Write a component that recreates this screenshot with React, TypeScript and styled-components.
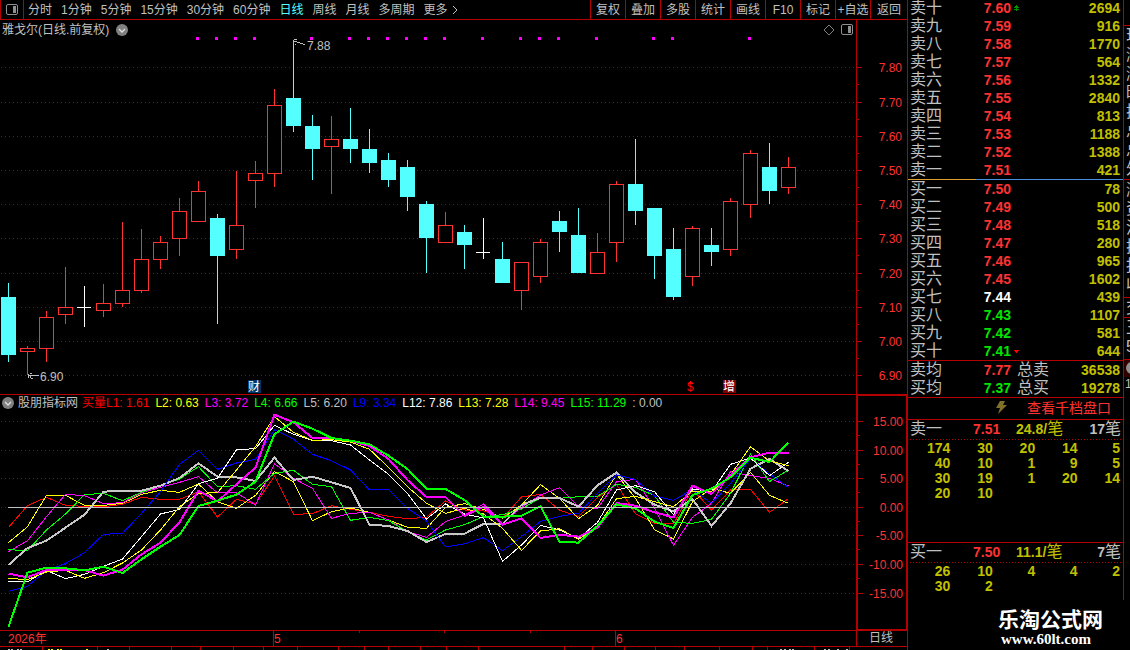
import React from 'react';
import styled, { createGlobalStyle, css } from 'styled-components';

const C = {
  line: '#b40000',
  dot: '#a00000',
  up: '#ff3232',
  down: '#54ffff',
  gray: '#c0c0c0',
  yellow: '#c0c000',
  green: '#00e600',
};

const Global = createGlobalStyle`
  *, *::before, *::after { box-sizing: border-box; }
  body {
    margin: 0;
    background: #000;
    color: ${C.gray};
    font: 12px/14px "Liberation Sans", "Noto Sans CJK SC", sans-serif;
    overflow: hidden;
  }
  button { font: inherit; color: inherit; background: none; border: 0; padding: 0; cursor: pointer; white-space: nowrap; }
  svg { display: block; }
  svg text { font: 12px "Liberation Sans", "Noto Sans CJK SC", sans-serif; }
`;

const Page = styled.div`
  display: flex;
  align-items: stretch;
  height: 100vh;
  overflow: hidden;
`;

const Main = styled.main`
  flex: 1;
  min-width: 0;
  display: flex;
  flex-direction: column;
`;

/* toolbar */
const Toolbar = styled.nav`
  display: flex;
  height: 20px;
  flex: none;
  border-bottom: 1px solid ${C.line};
`;
const LayoutButton = styled.button`
  display: flex;
  align-items: center;
  justify-content: center;
  width: 24px;
  border: solid ${C.line};
  border-width: 0 1px;
`;
const Periods = styled.div`
  display: flex;
  align-items: center;
  gap: 9px;
  padding-left: 4px;
`;
const Period = styled.button<{ $active?: boolean }>`
  display: flex;
  align-items: center;
  gap: 4px;
  color: ${p => (p.$active ? C.down : C.gray)};
`;
const Tools = styled.div`
  display: flex;
  margin-left: auto;
`;
const Tool = styled.button`
  width: 35px;
  border-left: 1px solid ${C.line};
  &:last-child { width: 37px; }
`;

/* chart panels */
const ChartRow = styled.section`
  display: grid;
  grid-template-columns: minmax(0, 1fr) 51px;
  flex: none;
`;
const Plot = styled.div<{ $framed?: boolean }>`
  min-width: 0;
  overflow: hidden;
  ${p => p.$framed && css`
    border: solid ${C.line};
    border-width: 1px 0;
  `}
`;
const Axis = styled.div<{ $framed?: boolean }>`
  border-left: 1px solid ${C.line};
  ${p => p.$framed && css`
    border: 2px solid ${C.line};
    border-right-width: 1px;
  `}
`;
const PlotHeader = styled.header`
  display: flex;
  align-items: center;
  height: 17px;
  padding: 2px 3px 0 2px;
  white-space: nowrap;
`;
const Title = styled.h1`
  margin: 0 7px 0 0;
  font-size: 12px;
  font-weight: 400;
`;
const HeaderIcons = styled.div`
  display: flex;
  align-items: center;
  gap: 6px;
  margin-left: auto;
`;
const Legend = styled.div`
  display: flex;
  align-items: center;
  height: 16px;
  padding-left: 2px;
  gap: 6px;
  white-space: nowrap;
`;
const LegendName = styled.span`
  margin: 0 -2px;
`;
const LegendItem = styled.span<{ $color: string }>`
  color: ${p => p.$color};
`;
const DateRow = styled(ChartRow)`
  height: 15px;
`;
const AxisFooter = styled.div`
  border-left: 1px solid ${C.line};
  text-align: center;
  padding-right: 2px;
`;
const BottomStrip = styled.div`
  border-top: 1px solid ${C.line};
  height: 4px;
`;

/* order book */
const Book = styled.aside`
  flex: 0 0 217px;
  display: flex;
  flex-direction: column;
  border-left: 1px solid ${C.line};
  font-size: 16px;
  line-height: 18px;
`;
const BookBody = styled.div`
  height: 600px;
  flex: none;
  border-right: 1px solid ${C.line};
  overflow: hidden;
`;
const Ladder = styled.table<{ $first?: boolean }>`
  width: 100%;
  table-layout: fixed;
  border-collapse: collapse;
  margin-top: ${p => (p.$first ? '-1px' : '0')};
  tr { height: 18px; }
  th, td { padding: 0; font-weight: 400; text-align: left; white-space: nowrap; height: 18px; line-height: 18px; }
  th { padding-left: 2px; }
`;
const Num = styled.span<{ $color?: string }>`
  font: bold 14px/18px "Liberation Sans", sans-serif;
  color: ${p => p.$color || C.yellow};
`;
const Right = styled.td`
  && { text-align: right; }
`;
const Volume = styled(Right)`
  && { padding-right: 3px; }
`;
const Mark = styled.td<{ $text?: boolean }>`
  && { padding-left: ${p => (p.$text ? 6 : 3)}px; }
`;
const Split = styled.div`
  height: 1px;
  background: linear-gradient(90deg, #e0a030 68px, #4a90e0 68px);
`;
const Rule = styled.div`
  height: 1px;
  background: ${C.line};
`;
const DottedRule = styled.div`
  height: 1px;
  margin: 0 1px 0 2px;
  background: repeating-linear-gradient(90deg, ${C.line} 0 1px, transparent 1px 3px);
`;
const DepthLink = styled.a`
  display: flex;
  align-items: center;
  justify-content: flex-end;
  gap: 20px;
  height: 21px;
  padding: 0 12px 2px 0;
  font-size: 14px;
  color: ${C.up};
  text-decoration: none;
`;
const QueueHead = styled.div`
  display: grid;
  grid-template-columns: 63px 43px 1fr auto;
  height: 19px;
  padding: 0 2px;
  white-space: nowrap;
`;
const PerOrder = styled.span`
  color: ${C.yellow};
`;
const QueueGrid = styled.div<{ $rows: number }>`
  display: grid;
  grid-template-columns: repeat(5, 1fr);
  grid-auto-rows: 15px;
  height: ${p => p.$rows}px;
  padding-right: 3px;
  text-align: right;
  ${Num} { line-height: 16px; }
`;
const Brand = styled.footer`
  flex: 1;
  display: flex;
  flex-direction: column;
  padding: 5px 0 0 90px;
  color: #fff;
  white-space: nowrap;
`;
const BrandName = styled.strong`
  font: bold 21px/26px "Noto Sans CJK SC", sans-serif;
`;
const BrandSite = styled.strong`
  padding-left: 3px;
  font: bold 15px/16px "Liberation Serif", serif;
`;

/* the next panel, cut by the window edge */
const Strip = styled.aside`
  flex: 0 0 6px;
  padding-top: 25px;
  overflow: hidden;
  font-size: 16px;
  white-space: nowrap;
`;
const StripGroup = styled.div<{ $height: number }>`
  height: ${p => p.$height}px;
  border-top: 1px solid ${C.line};
  padding-left: 2px;
  line-height: 19px;
`;
const StripBadge = styled.div`
  height: 18px;
  padding: 2px 0 0 2px;
  border-top: 1px solid ${C.line};
  background: #300000;
`;
const StripCount = styled.div`
  padding-left: 1px;
  font-size: 12px;
`;

const xAt = (k: number) => Math.round(8 + 19.013 * k);

type Kind = 'u' | 'd' | 'x';
/* kind, high, body top, body bottom, low */
const candles: [Kind, number, number, number, number][] = [
  ['d', 283, 297, 355, 362], ['u', 346, 348, 352, 375], ['u', 311, 317, 349, 362],
  ['u', 267, 307, 315, 324], ['x', 286, 307, 308, 327], ['u', 284, 303, 311, 317],
  ['u', 222, 290, 304, 307], ['u', 229, 259, 291, 293], ['u', 236, 242, 260, 269],
  ['u', 198, 211, 239, 256], ['u', 181, 191, 222, 222], ['d', 214, 218, 256, 324],
  ['u', 171, 225, 250, 259], ['u', 161, 173, 181, 208], ['u', 89, 105, 174, 187],
  ['d', 40, 98, 126, 132], ['d', 115, 126, 149, 180], ['u', 116, 139, 147, 194],
  ['d', 108, 139, 149, 163], ['d', 129, 149, 163, 173], ['d', 153, 160, 180, 187],
  ['d', 160, 167, 197, 211], ['d', 201, 204, 238, 273], ['u', 212, 225, 243, 243],
  ['d', 225, 232, 245, 269], ['x', 218, 252, 253, 259], ['d', 242, 259, 283, 283],
  ['u', 262, 262, 291, 310], ['u', 239, 242, 277, 283], ['d', 211, 221, 232, 252],
  ['d', 208, 235, 273, 273], ['u', 233, 252, 274, 274], ['u', 181, 184, 243, 262],
  ['d', 139, 184, 211, 225], ['d', 208, 208, 256, 279], ['d', 228, 249, 297, 300],
  ['u', 226, 228, 277, 286], ['d', 228, 245, 252, 266], ['u', 198, 201, 250, 256],
  ['u', 150, 153, 205, 218], ['d', 143, 167, 191, 204], ['u', 157, 167, 188, 194],
];

const signalBars = [10, 11, 12, 13, 16, 18, 19, 20, 21, 22, 23, 25, 27, 28, 29, 31, 34, 35, 39];

const priceTicks: [number, string][] = [
  [67, '7.80'], [102, '7.70'], [136, '7.60'], [170, '7.50'], [204, '7.40'],
  [238, '7.30'], [273, '7.20'], [307, '7.10'], [341, '7.00'], [375, '6.90'],
];
const valueTicks: [number, string][] = [
  [421, '15.00'], [450, '10.00'], [478, '5.00'], [507, '0.00'],
  [535, '-5.00'], [564, '-10.00'], [593, '-15.00'],
];

/* depth below the top of the indicator panel, in thirds of a pixel */
const series: { color: string; width: number; pts: number[] }[] = [
  { color: '#ff0000', width: 1, pts: [412,347,322,346,349,350,343,322,328,328,305,381,328,342,258,373,371,347,358,367,379,386,382,333,360,362,385,321,313,360,380,322,283,371,400,402,298,360,300,298,367,326] },
  { color: '#ffff00', width: 1, pts: [458,410,316,316,346,346,340,313,301,307,282,335,355,316,245,275,392,365,354,367,390,412,415,352,341,358,385,345,284,325,386,346,253,325,419,447,335,295,310,247,316,340] },
  { color: '#ff00ff', width: 1, pts: [485,452,380,313,317,341,338,308,292,277,260,309,308,345,221,265,295,385,370,367,390,425,442,395,375,342,400,352,315,293,350,355,275,268,355,466,382,340,245,257,265,288] },
  { color: '#00ff00', width: 1, pts: [479,482,420,372,314,310,332,307,287,267,230,290,287,298,250,241,283,290,391,382,392,425,450,420,404,380,374,357,323,325,320,319,283,292,317,397,400,388,310,192,275,240] },
  { color: '#c8c8c8', width: 2, pts: [525,474,452,413,374,305,302,302,287,264,220,260,262,273,203,270,260,277,294,404,408,423,456,432,431,402,402,345,323,324,350,286,248,307,344,364,327,408,340,236,207,243] },
  { color: '#0000ff', width: 1, pts: [604,589,541,521,488,433,430,370,305,223,181,238,219,208,119,148,193,212,240,300,298,355,393,471,461,443,482,440,394,379,370,310,255,269,318,331,298,340,280,205,252,292] },
  { color: '#ffffff', width: 1, pts: [574,576,541,566,553,529,507,440,372,358,281,265,179,176,106,133,151,152,165,210,253,310,387,342,372,384,514,465,406,420,445,397,300,287,305,374,297,305,223,204,257,217] },
  { color: '#ffff00', width: 1, pts: [565,569,546,541,565,548,519,480,420,350,310,308,240,170,80,127,151,149,156,178,232,290,340,370,355,372,415,481,423,416,448,410,326,319,335,350,303,305,255,170,213,227] },
  { color: '#ff00ff', width: 2, pts: [551,562,540,540,540,557,539,493,458,397,302,334,283,233,74,97,144,144,152,168,207,270,321,321,378,350,404,385,444,434,440,413,339,347,367,382,287,312,255,202,188,188] },
  { color: '#00ff00', width: 2, pts: [710,548,533,535,541,530,549,508,470,435,348,332,314,275,132,95,116,144,152,163,197,237,296,297,330,380,380,377,349,455,458,408,343,355,395,414,315,296,262,203,216,158] },
];

const legend: [string, string][] = [
  ['买量L1: 1.61', '#ff0000'], ['L2: 0.63', '#ffff00'], ['L3: 3.72', '#ff00ff'], ['L4: 6.66', '#00ff00'],
  ['L5: 6.20', C.gray], ['L9: 3.34', '#0000ff'], ['L12: 7.86', '#ffffff'], ['L13: 7.28', '#ffff00'],
  ['L14: 9.45', '#ff00ff'], ['L15: 11.29', '#00ff00'], [': 0.00', C.gray],
];

const periods = ['分时', '1分钟', '5分钟', '15分钟', '30分钟', '60分钟', '日线', '周线', '月线', '多周期'];
const tools = ['复权', '叠加', '多股', '统计', '画线', 'F10', '标记', '+自选', '返回'];

const asks = [
  ['卖十', '7.60', '2694'], ['卖九', '7.59', '916'], ['卖八', '7.58', '1770'], ['卖七', '7.57', '564'],
  ['卖六', '7.56', '1332'], ['卖五', '7.55', '2840'], ['卖四', '7.54', '813'], ['卖三', '7.53', '1188'],
  ['卖二', '7.52', '1388'], ['卖一', '7.51', '421'],
];
const bids = [
  ['买一', '7.50', '78'], ['买二', '7.49', '500'], ['买三', '7.48', '518'], ['买四', '7.47', '280'],
  ['买五', '7.46', '965'], ['买六', '7.45', '1602'], ['买七', '7.44', '439'], ['买八', '7.43', '1107'],
  ['买九', '7.42', '581'], ['买十', '7.41', '644'],
];
const previousClose = 7.44;
const priceColor = (p: string) =>
  +p > previousClose ? C.up : +p < previousClose ? C.green : '#fff';

const askQueue = ['174', '30', '20', '14', '5', '40', '10', '1', '9', '5', '30', '19', '1', '20', '14', '20', '10'];
const bidQueue = ['26', '10', '4', '4', '2', '30', '2'];

const GridLines = ({ ticks }: { ticks: [number, string][] }) => (
  <>
    {ticks.map(([y]) => (
      <line key={y} x1="1" x2="100%" y1={y + 0.5} y2={y + 0.5} stroke={C.dot} strokeDasharray="1 3" />
    ))}
  </>
);

const DropIcon = () => (
  <svg width="12" height="12" viewBox="0 0 12 12">
    <circle cx="6" cy="6" r="6" fill="#808080" />
    <path d="M3 5l3 3 3-3" fill="none" stroke="#e0e0e0" strokeWidth="1.3" />
  </svg>
);

const PanelIcon = () => (
  <svg width="12" height="11" viewBox="0 0 12 11">
    <rect x="0.5" y="0.5" width="11" height="10" rx="1.5" fill="none" stroke="#909090" />
    <rect x="7" y="2" width="3" height="7" fill="#909090" />
  </svg>
);

const PriceChart = () => (
  <svg width="100%" height="357" shapeRendering="crispEdges">
    <g transform="translate(0,-37)">
      <GridLines ticks={priceTicks} />
      {signalBars.map(k => <rect key={k} x={xAt(k) - 2} y="37" width="3" height="3" fill="#ff00ff" />)}
      {candles.map(([kind, high, top, bottom, low], k) => {
        const x = xAt(k);
        if (kind === 'd')
          return (
            <g key={k} fill={C.down}>
              <rect x={x} y={high} width="1" height={low - high} />
              <rect x={x - 7} y={top} width="15" height={bottom - top} />
            </g>
          );
        if (kind === 'x')
          return (
            <g key={k} fill="#fff">
              <rect x={x} y={high} width="1" height={low - high} />
              <rect x={x - 7} y={top} width="14" height="1" />
            </g>
          );
        return (
          <g key={k}>
            <rect x={x} y={high} width="1" height={low - high} fill={C.up} />
            <rect x={x - 6.5} y={top + 0.5} width="14" height={bottom - top - 1} fill="#000" stroke={C.up} />
          </g>
        );
      })}
      <g fill="none" stroke={C.gray}>
        <path d="M293.5 46v-6M293 41.5h4M294 39.5h3M295 44.5h1M297 42.5h3M300 43.5h3M303 44.5h2" />
        <path d="M28 375.5h11M28.5 374v4M30.5 376v2M30 373.5h2M31 378.5h2" />
      </g>
      <text x="307" y="50" fill={C.gray}>7.88</text>
      <text x="40" y="381" fill={C.gray}>6.90</text>
      <rect x="248" y="380" width="13" height="13" fill="#003366" />
      <text x="248" y="391" fill="#fff">财</text>
      <path d="M690.5 381l3 3h-6z" fill="#ff0000" />
      <text x="687" y="391" fill="#ff0000">$</text>
      <rect x="723" y="380" width="13" height="13" fill="#800000" />
      <text x="723" y="391" fill="#fff">增</text>
    </g>
  </svg>
);

const AxisScale = ({ ticks, top, height, left, half }: {
  ticks: [number, string][]; top: number; height: number; left: number; half: number;
}) => (
  <svg width="100%" height={height} shapeRendering="crispEdges">
    <g transform={`translate(${-left},${-top})`}>
      {ticks.map(([y, label], i) => (
        <g key={label}>
          <rect x="857" y={y} width="5" height="1" fill={C.line} />
          {i < ticks.length - 1 && <rect x="857" y={y + half} width="2" height="1" fill={C.line} />}
          <text x="902" y={y + 5} textAnchor="end" fill={C.up}>{label}</text>
        </g>
      ))}
    </g>
  </svg>
);

const IndicatorChart = () => (
  <svg width="100%" height="219" shapeRendering="crispEdges">
    <g transform="translate(0,-411)">
      <GridLines ticks={valueTicks} />
      {series.map((s, i) => (
        <polyline
          key={i}
          fill="none"
          stroke={s.color}
          strokeWidth={s.width}
          points={s.pts.map((v, k) => `${xAt(k) + 0.5},${390 + v / 3}`).join(' ')}
        />
      ))}
      <rect x="8" y="507" width="780" height="1" fill={C.gray} />
    </g>
  </svg>
);

const DateScale = () => (
  <svg width="100%" height="15" shapeRendering="crispEdges">
    {[359, 444, 530].map(x => <rect key={x} x={x} y="0" width="1" height="2" fill={C.line} />)}
    <text x="8" y="12" fill={C.up}>2026年</text>
    <rect x="273" width="1" height="15" fill={C.line} />
    <text x="274" y="12" fill={C.up}>5</text>
    <rect x="615" width="1" height="15" fill={C.line} />
    <text x="616" y="12" fill={C.up}>6</text>
  </svg>
);

const tabEdges = [42, 97, 129, 171, 200, 233, 263, 297, 338, 364, 388, 420, 446, 478, 564, 592, 624, 655, 684, 719, 752, 767, 814, 849];
const tabMarks: [number, string][] = [
  [8, C.gray], [11, C.gray], [17, C.gray], [20, C.gray], [48, '#ffff00'], [51, '#ffff00'], [57, '#ffff00'], [60, '#ffff00'],
  [86, '#ffff00'], [107, C.gray], [780, C.gray], [784, C.gray], [789, C.gray], [792, C.gray], [824, C.gray], [828, C.gray], [837, C.gray], [846, C.gray],
];

const LadderCols = () => (
  <colgroup>
    <col width="42" />
    <col width="61" />
    <col width="42" />
    <col />
  </colgroup>
);

const LadderRows = ({ rows, marks }: { rows: string[][]; marks: Record<string, React.ReactNode> }) => (
  <tbody>
    {rows.map(([name, price, volume]) => (
      <tr key={name}>
        <th scope="row">{name}</th>
        <Right><Num $color={priceColor(price)}>{price}</Num></Right>
        <Mark>{marks[name]}</Mark>
        <Volume><Num>{volume}</Num></Volume>
      </tr>
    ))}
  </tbody>
);

const UpMark = () => (
  <svg width="5" height="6" viewBox="0 0 5 6" shapeRendering="crispEdges">
    <path d="M2 0h1v1h1v1h1v1H0V2h1V1h1zM2 3h1v1h2v1H3v1H2V5H0V4h2z" fill="#009000" />
  </svg>
);
const DownMark = () => (
  <svg width="5" height="3" viewBox="0 0 5 3" shapeRendering="crispEdges">
    <path d="M0 0h5v1H4v1H3v1H2V2H1V1H0z" fill="#ff0000" />
  </svg>
);

export default function App() {
  return (
    <>
      <Global />
      <Page>
        <Main>
          <Toolbar>
            <LayoutButton aria-label="布局"><PanelIcon /></LayoutButton>
            <Periods>
              {periods.map(p => <Period key={p} $active={p === '日线'}>{p}</Period>)}
              <Period>
                更多
                <svg width="6" height="10" viewBox="0 0 6 10"><path d="M1 1l4 4-4 4" fill="none" stroke={C.gray} /></svg>
              </Period>
            </Periods>
            <Tools>{tools.map(t => <Tool key={t}>{t}</Tool>)}</Tools>
          </Toolbar>

          <ChartRow>
            <Plot>
              <PlotHeader>
                <Title>雅戈尔(日线.前复权)</Title>
                <DropIcon />
                <HeaderIcons>
                  <svg width="12" height="12" viewBox="0 0 12 12"><path d="M6 1l5 5-5 5-5-5z" fill="none" stroke="#808080" /></svg>
                  <PanelIcon />
                </HeaderIcons>
              </PlotHeader>
              <PriceChart />
            </Plot>
            <Axis><AxisScale ticks={priceTicks} top={20} height={374} left={857} half={17} /></Axis>
          </ChartRow>

          <ChartRow>
            <Plot $framed>
              <Legend>
                <DropIcon />
                <LegendName>股朋指标网</LegendName>
                {legend.map(([label, color]) => <LegendItem key={label} $color={color}>{label}</LegendItem>)}
              </Legend>
              <IndicatorChart />
            </Plot>
            <Axis $framed><AxisScale ticks={valueTicks} top={396} height={233} left={857} half={14} /></Axis>
          </ChartRow>

          <DateRow>
            <DateScale />
            <AxisFooter>日线</AxisFooter>
          </DateRow>
          <BottomStrip>
            <svg width="100%" height="3" shapeRendering="crispEdges">
              {tabEdges.map(x => <rect key={x} x={x} width="1" height="3" fill={C.line} />)}
              {tabMarks.map(([x, color]) => <rect key={x} x={x} y="2" width="2" height="1" fill={color} />)}
            </svg>
          </BottomStrip>
        </Main>

        <Book>
          <BookBody>
            <Ladder $first>
              <LadderCols />
              <LadderRows rows={asks} marks={{ 卖十: <UpMark /> }} />
            </Ladder>
            <Split />
            <Ladder>
              <LadderCols />
              <LadderRows rows={bids} marks={{ 买十: <DownMark /> }} />
            </Ladder>
            <Rule />
            <Ladder>
              <LadderCols />
              <tbody>
                <tr>
                  <th scope="row">卖均</th>
                  <Right><Num $color={C.up}>7.77</Num></Right>
                  <Mark $text>总卖</Mark>
                  <Volume><Num>36538</Num></Volume>
                </tr>
                <tr>
                  <th scope="row">买均</th>
                  <Right><Num $color={C.green}>7.37</Num></Right>
                  <Mark $text>总买</Mark>
                  <Volume><Num>19278</Num></Volume>
                </tr>
              </tbody>
            </Ladder>
            <Rule />
            <DepthLink href="#depth">
              <svg width="11" height="13" viewBox="0 0 11 13"><path d="M4 0h5L7 4h4L2 13l2-6H0z" fill="#80702c" /></svg>
              查看千档盘口
            </DepthLink>
            <Rule />
            <QueueHead>
              <span>卖一</span>
              <Num $color={C.up}>7.51</Num>
              <PerOrder><Num>24.8/</Num>笔</PerOrder>
              <span><Num $color={C.gray}>17</Num>笔</span>
            </QueueHead>
            <DottedRule />
            <QueueGrid $rows={102}>{askQueue.map((v, i) => <Num key={i}>{v}</Num>)}</QueueGrid>
            <Rule />
            <QueueHead>
              <span>买一</span>
              <Num $color={C.up}>7.50</Num>
              <PerOrder><Num>11.1/</Num>笔</PerOrder>
              <span><Num $color={C.gray}>7</Num>笔</span>
            </QueueHead>
            <DottedRule />
            <QueueGrid $rows={38}>{bidQueue.map((v, i) => <Num key={i}>{v}</Num>)}</QueueGrid>
          </BookBody>
          <Brand>
            <BrandName>乐淘公式网</BrandName>
            <BrandSite>www.60lt.com</BrandSite>
          </Brand>
        </Book>

        <Strip>
          <StripGroup $height={154}>
            {['现', '涨', '涨', '昨', '换', '总', '总', '外'].map((t, i) => <div key={i}>{t}</div>)}
          </StripGroup>
          <StripGroup $height={118}>
            {['涨', '资', '流', '换', '报', '收'].map((t, i) => <div key={i}>{t}</div>)}
          </StripGroup>
          <StripGroup $height={20}>交</StripGroup>
          <StripGroup $height={42}>
            <div>王</div>
            <div>5</div>
          </StripGroup>
          <StripBadge>
            <svg width="12" height="12" viewBox="0 0 12 12"><circle cx="6" cy="6" r="6" fill="#909090" /></svg>
          </StripBadge>
          <StripCount>1</StripCount>
        </Strip>
      </Page>
    </>
  );
}
